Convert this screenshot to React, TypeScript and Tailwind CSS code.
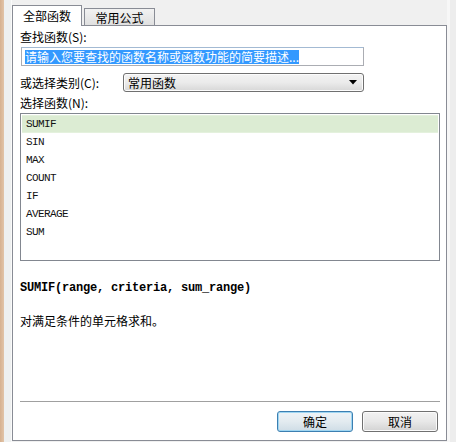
const functions = ["SUMIF", "SIN", "MAX", "COUNT", "IF", "AVERAGE", "SUM"];

function Tabs() {
    return (
        <div className="flex h-[25px] items-end">
            <div className="relative z-10 -mb-px flex h-[21px] w-[70px] items-start justify-center border border-b-0 border-[#898c95] bg-white pt-[3px] text-[12px] leading-[14px] text-black">
                全部函数
            </div>
            <div className="ml-[2px] flex h-[17px] w-[71px] items-start justify-center border border-b-0 border-[#898c95] bg-gradient-to-b from-[#f2f2f2] to-[#e0e0e0] pt-[2px] text-[12px] leading-[14px] text-black">
                常用公式
            </div>
        </div>
    );
}

function Button({ label, primary = false }: { label: string; primary?: boolean }) {
    return (
        <div
            className={`flex h-[21px] w-[76px] items-center justify-center rounded-[3px] border text-[12px] leading-[14px] text-black ${
                primary
                    ? "border-[#3c7fb1] bg-gradient-to-b from-[#eef3f6] via-[#e3ebf0] to-[#cfdde6] shadow-[inset_0_0_0_1px_#9fd6f2]"
                    : "border-[#707070] bg-gradient-to-b from-[#f2f2f2] via-[#e8e8e8] to-[#d3d3d3] shadow-[inset_0_0_0_1px_#fbfbfb]"
            }`}
        >
            {label}
        </div>
    );
}

export default function App() {
    return (
        <div className="flex h-[442px] w-[456px] overflow-hidden bg-[#f0f0f0] font-['Noto_Sans_CJK_SC',sans-serif] text-[12px] text-black">
            {/* left edge */}
            <div className="w-[4px] bg-gradient-to-r from-[#d6b190] to-[#e2c4a8]" />
            <div className="w-[8px] border-r border-[#fafafa] bg-[#eef0f0]" />

            <div className="flex w-[435px] flex-col">
                <Tabs />

                {/* panel */}
                <div className="flex h-[416px] flex-col border border-[#898c95] bg-white pl-[7px] pr-[6px] pb-[8px]">
                    <div className="mt-[4px] h-[14px] leading-[14px]">查找函数(S):</div>

                    <div className="mt-[3px] ml-[1px] flex h-[19px] w-[343px] items-center border border-[#abadb3] border-t-[#a3bad3] pl-[3px]">
                        <span className="bg-[#3399ff] leading-[14px] text-white">
                            请输入您要查找的函数名称或函数功能的简要描述...
                        </span>
                    </div>

                    <div className="mt-[7px] flex h-[19px] items-center">
                        <div className="w-[103px] leading-[14px]">或选择类别(C):</div>
                        <div className="flex h-[19px] w-[241px] items-center justify-between rounded-[3px] border border-[#707070] bg-gradient-to-b from-[#f3f3f3] via-[#ebebeb] to-[#d7d7d7] pl-[4px] pr-[6px] shadow-[inset_0_0_0_1px_#fcfcfc]">
                            <span className="leading-[14px]">常用函数</span>
                            <svg width="8" height="5" viewBox="0 0 8 5">
                                <polygon points="0,0 8,0 4,4.5" fill="#000" />
                            </svg>
                        </div>
                    </div>

                    <div className="mt-[4px] h-[14px] leading-[14px]">选择函数(N):</div>

                    <div className="mt-[3px] flex h-[148px] w-[420px] flex-col border border-[#828790] px-[1px] pt-[1px] font-['Liberation_Mono',monospace] text-[11px] tracking-[-0.6px] text-[#111]">
                        {functions.map((fn, i) => (
                            <div
                                key={fn}
                                className={`flex h-[18px] items-center pl-[4px] ${
                                    i === 0 ? "border-y border-[#e4f1dd] bg-[#dcecd3]" : ""
                                }`}
                            >
                                {fn}
                            </div>
                        ))}
                    </div>

                    <div className="mt-[20px] h-[14px] font-['Liberation_Mono',monospace] text-[12px] font-bold leading-[14px] tracking-[-0.2px]">
                        SUMIF(range, criteria, sum_range)
                    </div>

                    <div className="mt-[19px] h-[14px] leading-[14px]">对满足条件的单元格求和。</div>

                    <div className="flex-1" />

                    <div className="h-px w-[420px] bg-[#a0a0a0]" />

                    <div className="mt-[9px] flex w-[420px] justify-end gap-[9px] pr-[2px]">
                        <Button label="确定" primary />
                        <Button label="取消" />
                    </div>
                </div>
            </div>

            {/* right edge */}
            <div className="w-[9px] border-l-[3px] border-[#f7f7f7] bg-[#ededed]" />
        </div>
    );
}
